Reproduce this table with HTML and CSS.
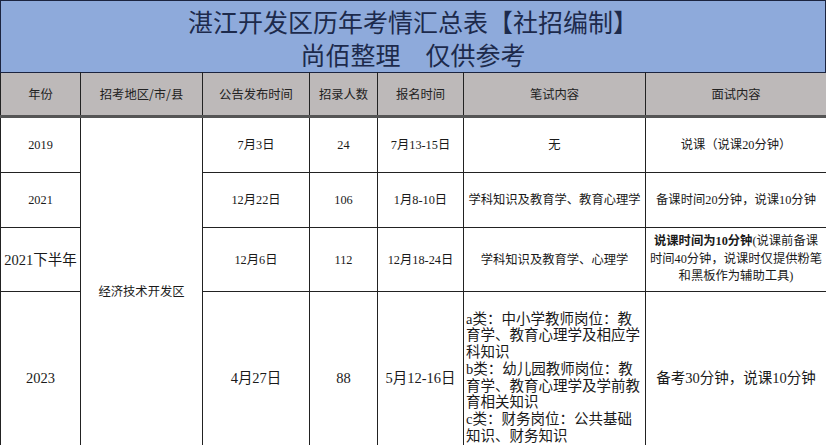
FILE: index.html
```html
<!DOCTYPE html>
<html lang="zh-CN">
<head>
<meta charset="utf-8">
<title>湛江开发区历年考情汇总表</title>
<link rel="stylesheet" href="styles.css">
</head>
<body>
<div class="sheet">
  <div class="title">
    <div>湛江开发区历年考情汇总表【社招编制】</div>
    <div>尚佰整理　仅供参考</div>
  </div>
  <table class="grid">
    <colgroup>
      <col class="c-year"><col class="c-area"><col class="c-pub"><col class="c-num"><col class="c-reg"><col class="c-written"><col class="c-interview">
    </colgroup>
    <thead>
      <tr class="head">
        <th>年份</th><th>招考地区/市/县</th><th>公告发布时间</th><th>招录人数</th><th>报名时间</th><th>笔试内容</th><th>面试内容</th>
      </tr>
    </thead>
    <tbody>
      <tr class="r1">
        <td>2019</td>
        <td rowspan="4" class="area">经济技术开发区</td>
        <td>7月3日</td><td>24</td><td>7月13-15日</td><td>无</td><td>说课（说课20分钟）</td>
      </tr>
      <tr class="r2">
        <td>2021</td><td>12月22日</td><td>106</td><td>1月8-10日</td><td>学科知识及教育学、教育心理学</td><td>备课时间20分钟，说课10分钟</td>
      </tr>
      <tr class="r3">
        <td class="big">2021下半年</td><td>12月6日</td><td>112</td><td>12月18-24日</td><td>学科知识及教育学、心理学</td>
        <td class="note"><b>说课时间为10分钟</b>(说课前备课<br>时间40分钟，说课时仅提供粉笔<br>和黑板作为辅助工具)</td>
      </tr>
      <tr class="r4">
        <td class="big">2023</td><td class="big">4月27日</td><td class="big">88</td><td class="big">5月12-16日</td>
        <td class="written">a类：中小学教师岗位：教<br>育学、教育心理学及相应学<br>科知识<br>b类：幼儿园教师岗位：教<br>育学、教育心理学及学前教<br>育相关知识<br>c类：财务岗位：公共基础<br>知识、财务知识</td>
        <td class="big">备考30分钟，说课10分钟</td>
      </tr>
    </tbody>
  </table>
</div>
</body>
</html>
```
FILE: styles.css
```css
html, body {
  margin: 0;
  padding: 0;
  background: #ffffff;
}
body {
  font-family: "Liberation Serif", "Noto Sans CJK SC", serif;
  color: #1a1a1a;
}
.sheet {
  width: 826px;
}
.title {
  box-sizing: border-box;
  height: 72px;
  padding-top: 4px;
  background: #8eaadb;
  border-top: 1px solid #1b2440;
  border-left: 1px solid #1b2440;
  border-right: 1px solid #1b2440;
  text-align: center;
  font-family: "Noto Sans CJK SC", sans-serif;
  font-size: 25px;
  line-height: 32.5px;
  color: #1d2a4c;
}
.grid {
  width: 826px;
  border-collapse: collapse;
  table-layout: fixed;
}
.c-year { width: 80px; }
.c-area { width: 122px; }
.c-pub { width: 107px; }
.c-num { width: 68px; }
.c-reg { width: 86px; }
.c-written { width: 182px; }
.c-interview { width: 181px; }
.grid th, .grid td {
  border: 1px solid #222222;
  padding: 0 1px;
  text-align: center;
  vertical-align: middle;
  font-size: 12.3px;
  font-weight: normal;
  line-height: 16px;
  white-space: nowrap;
  overflow: hidden;
}
.grid th {
  font-family: "Noto Sans CJK SC", sans-serif;
  background: #bdb9b9;
  color: #222222;
  border-top: 1px solid #1b2440;
  border-bottom: 3px solid #555555;
}
.head { height: 44px; }
.r1 { height: 56px; }
.r2 { height: 55px; }
.r3 { height: 64px; }
.r4 { height: 172px; }
.area {
  font-family: "Noto Sans CJK SC", sans-serif;
}
.big {
  font-size: 14.5px !important;
}
.note {
  line-height: 17.5px !important;
}
.note b {
  font-weight: bold;
}
.written {
  text-align: left !important;
  padding-left: 2px !important;
  font-size: 14.5px !important;
  line-height: 16.7px !important;
}
```
